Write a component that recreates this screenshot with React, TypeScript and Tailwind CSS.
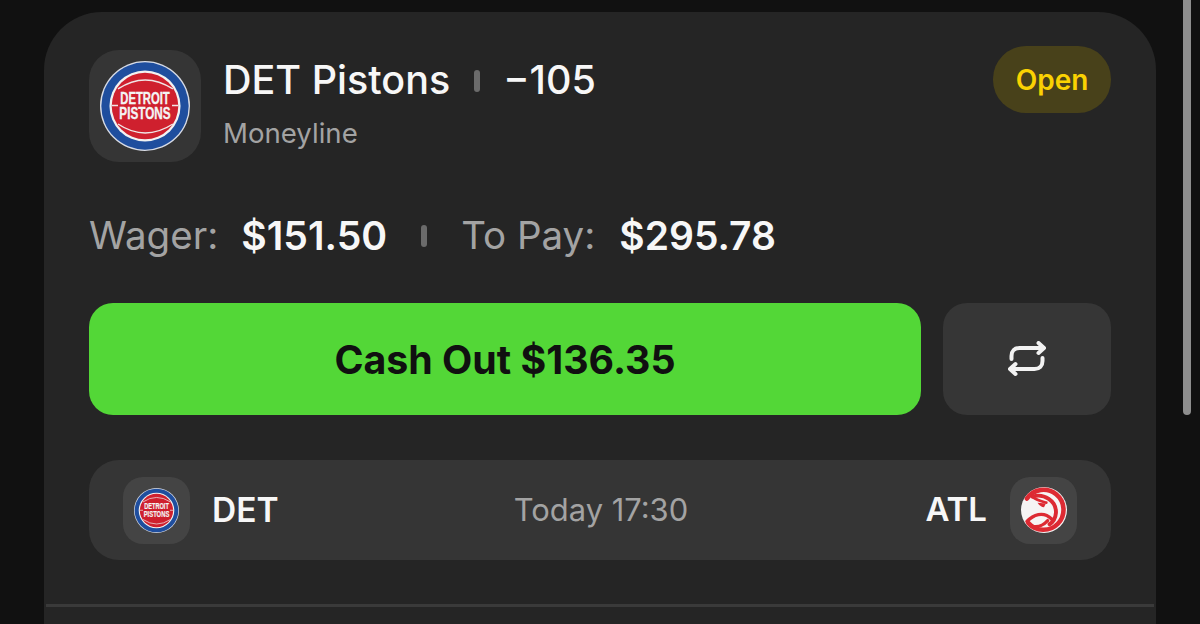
import React from "react";

function Pistons({ size }: { size: number }) {
  return (
    <svg width={size} height={size} viewBox="0 0 100 100">
      <circle cx="50" cy="50" r="50" fill="#d8dce6" />
      <circle cx="50" cy="50" r="48.5" fill="#1f4e9e" />
      <circle cx="50" cy="50" r="39.5" fill="#f2f2f2" />
      <circle cx="50" cy="50" r="37" fill="#cf202e" />
      <path d="M20 31 Q50 11 81 31" fill="none" stroke="#f0e6e6" strokeWidth="1.6" />
      <path d="M20 70 Q50 90 81 70" fill="none" stroke="#f0e6e6" strokeWidth="1.6" />
      <path d="M13 49.5 H20 M80 49.5 H87" stroke="#f0e6e6" strokeWidth="1.6" />
      <text x="50" y="47.5" textAnchor="middle" fill="#f4f4f4" stroke="#f4f4f4" strokeWidth="0.4" fontFamily="'Liberation Sans', sans-serif" fontWeight="700" fontSize="18.5" textLength="55" lengthAdjust="spacingAndGlyphs">DETROIT</text>
      <text x="50" y="64.5" textAnchor="middle" fill="#f4f4f4" stroke="#f4f4f4" strokeWidth="0.4" fontFamily="'Liberation Sans', sans-serif" fontWeight="700" fontSize="18.5" textLength="57" lengthAdjust="spacingAndGlyphs">PISTONS</text>
    </svg>
  );
}

function Hawks({ size }: { size: number }) {
  return (
    <svg width={size} height={size} viewBox="0 0 100 100" fill="none">
      <circle cx="50" cy="50" r="50" fill="#f6f4f4" />
      <path d="M13 25 A43.5 43.5 0 1 1 16 78" stroke="#dd2a33" strokeWidth="10" strokeLinecap="round" />
      <path d="M25 21 C50 13 77 30 76 56 C75 68 70 76 62 81" stroke="#dd2a33" strokeWidth="8.5" strokeLinecap="round" />
      <path d="M25 21 C34 29 44 31 55 34" stroke="#dd2a33" strokeWidth="6" strokeLinecap="round" />
      <path d="M36 34 L54 36 L50 44 C45 44 40 40 36 34 Z" fill="#dd2a33" />
      <path d="M13 75 C26 61 48 51 67 70" stroke="#dd2a33" strokeWidth="7.5" strokeLinecap="round" />
      <path d="M20 84 C36 90 50 82 58 73" stroke="#dd2a33" strokeWidth="7" strokeLinecap="round" />
    </svg>
  );
}

function RepeatIcon() {
  return (
    <svg width="38" height="36" viewBox="0 0 38 36" fill="none" stroke="#f2f2f2" strokeWidth="4" strokeLinecap="round" strokeLinejoin="round">
      <path d="M3.5 18 V15 C3.5 10 6.5 7 11.5 7 H35.5" />
      <path d="M30.5 2 L36 7 L30.5 12" />
      <path d="M34.5 17 V20 C34.5 25 31.5 28 26.5 28 H2.5" />
      <path d="M7.5 23 L2 28 L7.5 33" />
    </svg>
  );
}

function Sep({ className }: { className: string }) {
  return <span className={`w-[6px] h-[22px] rounded-full bg-[#6b6b6b] ${className}`} />;
}

export default function App() {
  return (
    <div
      className="h-[624px] w-[1200px] overflow-hidden bg-[#111111] flex"
      style={{ fontFamily: "Inter, 'Liberation Sans', sans-serif" }}
    >
      <div className="w-[1112px] ml-[44px] mt-[12px] h-[700px] shrink-0 rounded-t-[58px] bg-[#252525] flex flex-col">
        <div className="px-[45px] pt-[38px]">
          <div className="flex items-start">
            <div className="w-[112px] h-[112px] rounded-[30px] bg-[#353535] flex items-center justify-center">
              <Pistons size={90} />
            </div>
            <div className="ml-[22px] flex-1 flex flex-col">
              <div className="flex items-center h-[62px] text-[39.5px] font-medium text-[#f7f7f7]">
                <span>DET Pistons</span>
                <Sep className="mx-[24px]" />
                <span className="-ml-[1px]">−105</span>
              </div>
              <div className="text-[27.6px] text-[#a3a3a3] mt-[1px] leading-[40px]">Moneyline</div>
            </div>
            <div className="-mt-[4px] w-[118px] h-[67px] rounded-[33px] bg-[#48411a] flex items-center justify-center text-[28px] font-semibold text-[#fad202]">
              Open
            </div>
          </div>

          <div className="mt-[44px] h-[60px] flex items-center font-normal text-[38.5px]">
            <span className="text-[#a3a3a3]">Wager:</span>
            <span className="ml-[23px] text-[39.2px] font-semibold text-[#f7f7f7]">$151.50</span>
            <Sep className="mx-[34px]" />
            <span className="text-[#a3a3a3]">To Pay:</span>
            <span className="ml-[24px] text-[39px] font-semibold text-[#f7f7f7]">$295.78</span>
          </div>

          <div className="mt-[37px] flex gap-[22px]">
            <div className="w-[832px] h-[112px] pt-[2px] rounded-[24px] bg-[#53d737] flex items-center justify-center text-[39.3px] font-bold text-[#101010]">
              Cash Out $136.35
            </div>
            <div className="flex-1 h-[112px] rounded-[24px] bg-[#363636] flex items-center justify-center">
              <RepeatIcon />
            </div>
          </div>

          <div className="mt-[45px] h-[100px] rounded-[30px] bg-[#353535] flex items-center px-[34px]">
            <div className="w-[67px] h-[67px] rounded-[20px] bg-[#444444] flex items-center justify-center">
              <Pistons size={45} />
            </div>
            <span className="ml-[22px] text-[33.5px] font-semibold text-[#f7f7f7]">DET</span>
            <span className="flex-1 text-center pr-[2px] text-[30.9px] text-[#a3a3a3]">Today 17:30</span>
            <span className="mr-[23px] text-[33px] font-semibold text-[#f7f7f7]">ATL</span>
            <div className="w-[67px] h-[67px] rounded-[20px] bg-[#444444] flex items-center justify-center">
              <Hawks size={46} />
            </div>
          </div>
        </div>
        <div className="mt-[44px] h-[3px] mx-[2px] bg-[#3a3a3a]" />
      </div>
      <div className="ml-[27px] w-[8px] h-[415px] rounded-b-full bg-[#8e8e8e] shrink-0" />
    </div>
  );
}
